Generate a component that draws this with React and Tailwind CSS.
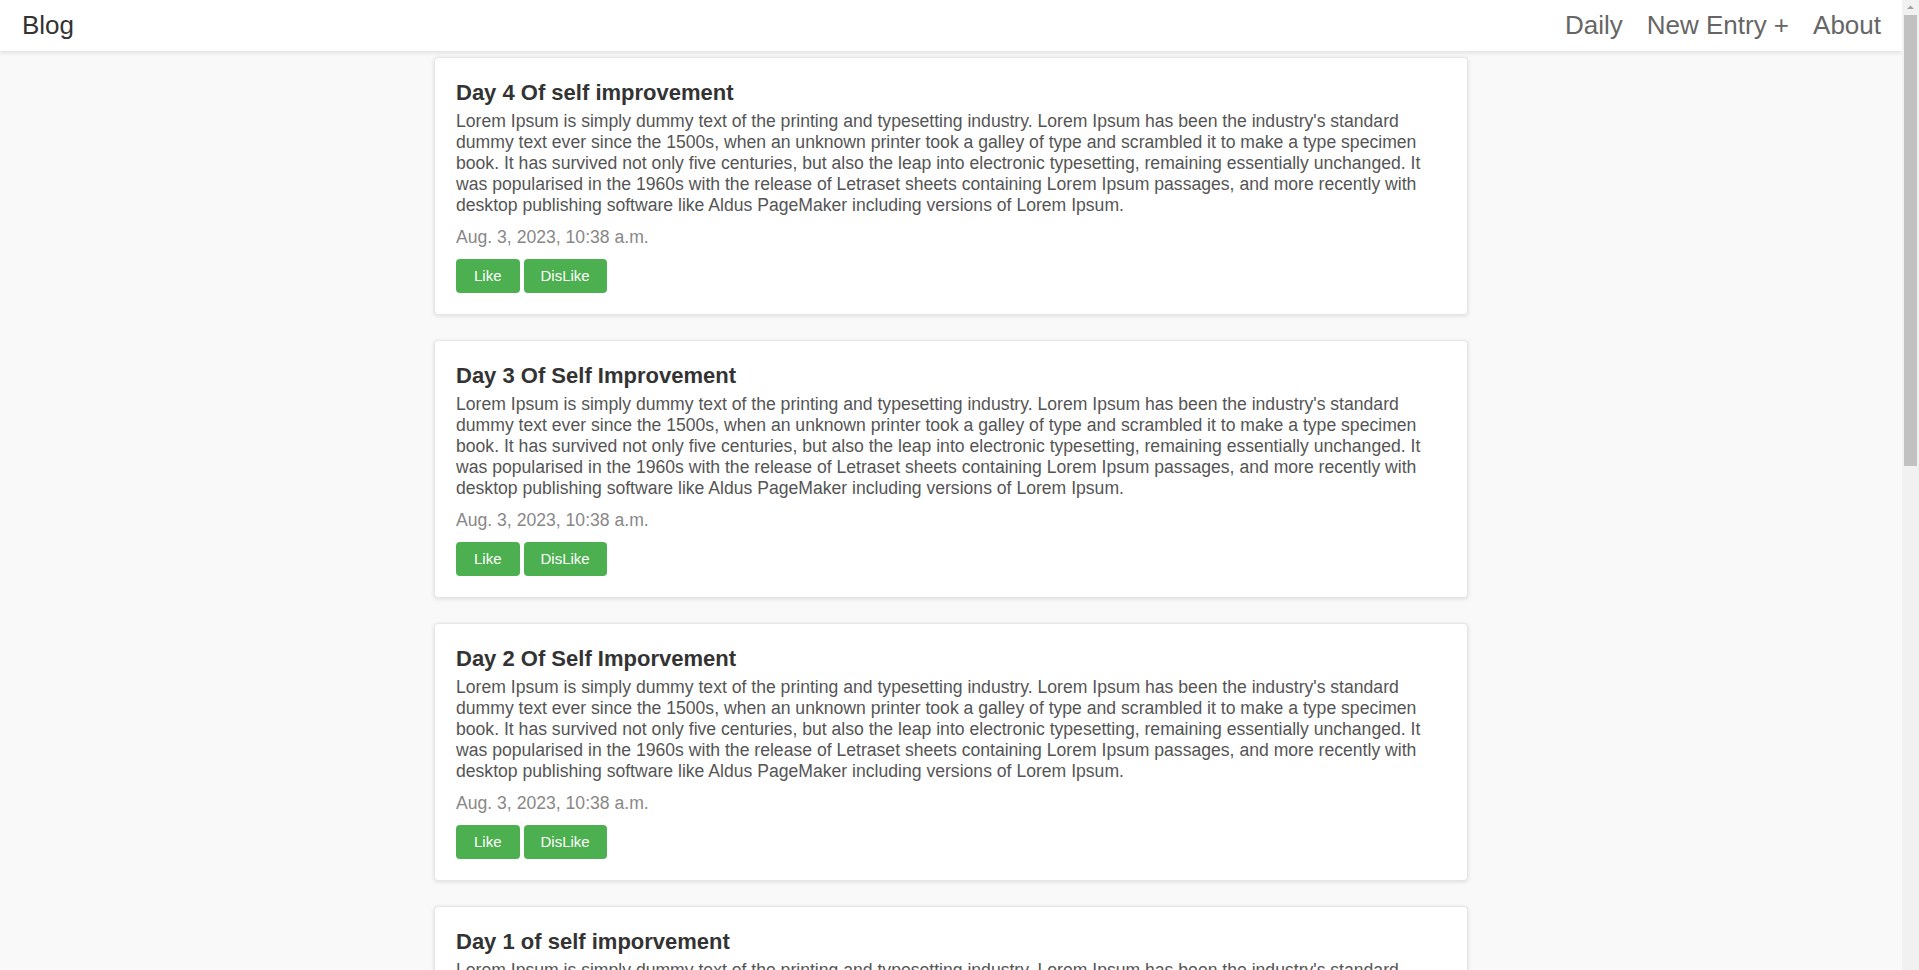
import React from 'react'

const LOREM =
  "Lorem Ipsum is simply dummy text of the printing and typesetting industry. Lorem Ipsum has been the industry's standard dummy text ever since the 1500s, when an unknown printer took a galley of type and scrambled it to make a type specimen book. It has survived not only five centuries, but also the leap into electronic typesetting, remaining essentially unchanged. It was popularised in the 1960s with the release of Letraset sheets containing Lorem Ipsum passages, and more recently with desktop publishing software like Aldus PageMaker including versions of Lorem Ipsum."

const posts = [
  { id: 4, title: 'Day 4 Of self improvement' },
  { id: 3, title: 'Day 3 Of Self Improvement' },
  { id: 2, title: 'Day 2 Of Self Imporvement' },
  { id: 1, title: 'Day 1 of self imporvement' },
]

function PostCard({ title }) {
  return (
    <div className="w-[1034px] shrink-0 bg-white border border-[#e6e6e6] rounded-[4px] shadow-[0_1px_4px_rgba(0,0,0,0.12)] px-[21px] pt-[22px] pb-[21px]">
      <h2 className="text-[22px] font-bold text-[#333] leading-[25px] mb-[6px]">{title}</h2>
      <p className="text-[17.6px] leading-[21px] text-[#555]">{LOREM}</p>
      <p className="text-[17.6px] leading-[21px] text-[#888] mt-[11px]">Aug. 3, 2023, 10:38 a.m.</p>
      <div className="flex gap-[4px] mt-[11px]">
        <button className="h-[34px] px-[18px] bg-[#4caf50] text-white text-[15px] rounded-[4px]">Like</button>
        <button className="h-[34px] px-[17px] bg-[#4caf50] text-white text-[15px] rounded-[4px]">DisLike</button>
      </div>
    </div>
  )
}

export default function App() {
  return (
    <div className="h-screen flex overflow-hidden bg-[#f9f9f9] font-['Liberation_Sans',Arial,sans-serif]">
      <div className="flex-1 flex flex-col overflow-hidden">
        {/* top bar */}
        <nav className="h-[51px] shrink-0 bg-white shadow-[0_2px_4px_rgba(0,0,0,0.1)] flex items-center justify-between pl-[22px] pr-[21px] relative z-10">
          <a className="text-[26px] text-[#333]">Blog</a>
          <div className="flex gap-[24px] text-[26px] text-[#666]">
            <a>Daily</a>
            <a>New Entry +</a>
            <a>About</a>
          </div>
        </nav>

        <main className="flex flex-col items-center gap-[25px] pt-[6px] pb-[25px]">
          {posts.map((p) => (
            <PostCard key={p.id} title={p.title} />
          ))}
        </main>
      </div>

      {/* page scrollbar */}
      <div className="w-[17px] shrink-0 bg-[#f1f1f1] flex flex-col items-center">
        <svg width="17" height="15" viewBox="0 0 17 15">
          <path d="M5 9 L8.5 5.5 L12 9 Z" fill="#a3a3a3" />
        </svg>
        <div className="w-[13px] h-[451px] bg-[#c1c1c1]" />
      </div>
    </div>
  )
}
